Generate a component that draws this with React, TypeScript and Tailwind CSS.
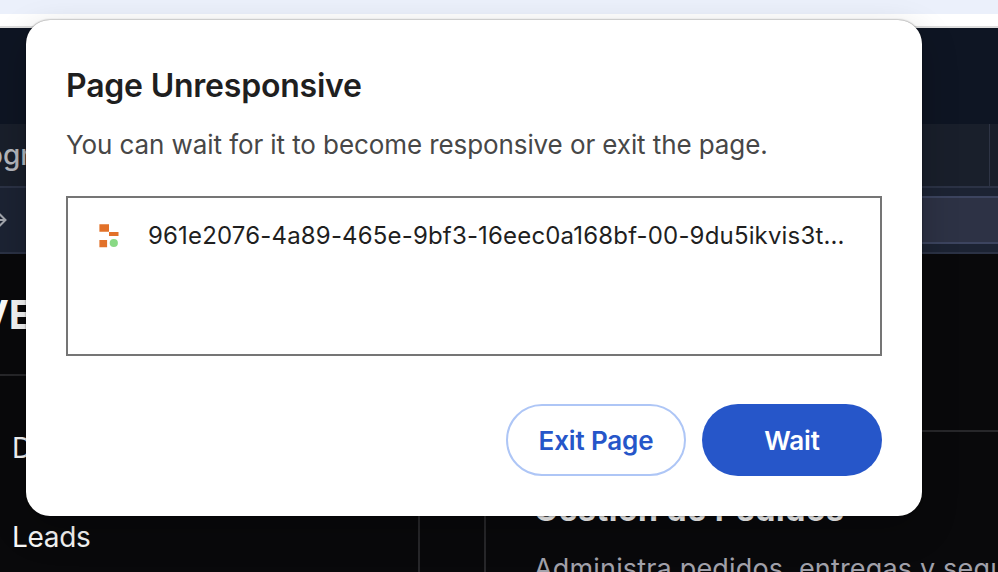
function BrowserChrome() {
  return (
    <header className="shrink-0">
      <div className="h-[14px] bg-[#ebf0fb]" />
      <div className="h-[14px] border-b-2 border-[#dddddd] bg-white" />
      <div className="h-24 bg-[#0e1523]" />
      <div className="flex h-16 items-center justify-between border-b-2 border-[#2b3245] bg-[#191f2b]">
        <span className="-ml-[14px] text-[28px] leading-8 font-medium text-[#b5b8be]">ogr</span>
        <div className="h-full w-[9px] border-l border-[#2e3445]" />
      </div>
      <div className="flex h-[66px] items-center border-b-2 border-[#2b3245] bg-[#1c2333]">
        <svg className="-ml-[13px] h-5 w-5 shrink-0" viewBox="0 0 20 20" fill="none" stroke="#a3a6ad" strokeWidth="2">
          <path d="M1 10H18.500M12.500 4 18.500 10l-6 6" />
        </svg>
        <div className="ml-24 h-12 flex-1 border-y-2 border-[#3c445f] bg-[#2d3245]" />
      </div>
    </header>
  );
}

function Sidebar() {
  return (
    <aside className="w-[420px] shrink-0 border-r-2 border-[#27272a] text-[#fafafa]">
      <div className="h-[122px] border-b-2 border-[#27272a] pt-[37px]">
        <div className="-ml-[21px] text-[40px] leading-[48px] font-bold">VE</div>
      </div>
      <nav className="pl-3 text-[28px] leading-10 tracking-[-0.3px]">
        <div className="pt-[52px]">D</div>
        <div className="pt-[49px]">Leads</div>
      </nav>
    </aside>
  );
}

function Dialog() {
  return (
    <section
      role="dialog"
      className="absolute top-5 left-[26px] flex h-[496px] w-[896px] flex-col rounded-[24px] bg-white px-10 pb-10 shadow-[0_0_2px_rgba(0,0,0,0.6),0_14px_36px_rgba(0,0,0,0.22)]"
    >
      <h1 className="mt-[46px] text-[32px] leading-10 font-semibold tracking-[-0.22px] whitespace-nowrap text-[#1f1f1f]">Page Unresponsive</h1>
      <p className="mt-[19px] text-[26px] leading-10 tracking-[-0.09px] whitespace-nowrap text-[#474747]">
        You can wait for it to become responsive or exit the page.
      </p>
      <div className="mt-[31px] flex h-40 shrink-0 items-start border-2 border-[#757575] pt-[18px] pl-[31px]">
        <svg className="mt-[8px] h-6 w-5 shrink-0" viewBox="0 0 20 24">
          <path fill="#e27129" d="M.4.200h9.600v7.500H.4zM10 8.100h9.500v3.900H10zM.4 15.900h7.700v7.300H.4z" />
          <circle cx="14.800" cy="19" r="4.100" fill="#89d985" />
        </svg>
        <span className="ml-[29px] text-[24px] leading-10 tracking-[0.17px] whitespace-nowrap text-[#1f1f1f]">
          961e2076-4a89-465e-9bf3-16eec0a168bf-00-9du5ikvis3t...
        </span>
      </div>
      <div className="mt-12 flex justify-end gap-4 text-[26px] font-semibold tracking-[-0.15px]">
        <button className="h-[72px] w-[180px] rounded-full border-2 border-[#aec6f6] px-0 pt-px whitespace-nowrap text-[#2656c9]">Exit Page</button>
        <button className="h-[72px] w-[180px] rounded-full bg-[#2656c9] px-0 pt-px text-white">Wait</button>
      </div>
    </section>
  );
}

export default function App() {
  return (
    <div className="relative flex h-[572px] w-[998px] flex-col overflow-hidden bg-[#09090b] font-['Inter',sans-serif]">
      <BrowserChrome />
      <div className="flex min-h-0 flex-1">
        <Sidebar />
        <main className="min-w-0 flex-1 pt-44 pl-16">
          <article className="h-60 w-[560px] rounded-tl-[16px] border-2 border-[#27272a] pt-[58px] pl-12 whitespace-nowrap">
            <h2 className="text-[32px] leading-10 font-bold tracking-[0.5px] text-[#fafafa]">Gestión de Pedidos</h2>
            <p className="mt-[19px] text-[27px] leading-10 tracking-[0.17px] text-[#a1a1aa]">Administra pedidos, entregas y seguimiento</p>
          </article>
        </main>
      </div>
      <Dialog />
    </div>
  );
}
